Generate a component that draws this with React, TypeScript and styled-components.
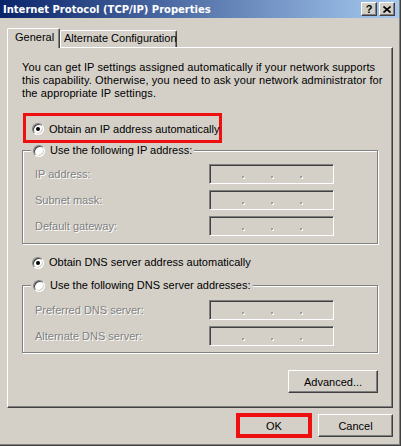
import React from "react";
import styled, { createGlobalStyle } from "styled-components";

const GlobalStyle = createGlobalStyle`
  html, body {
    margin: 0;
    padding: 0;
    background: #d4d0c8;
  }
  body {
    font-family: "Liberation Sans", Arial, sans-serif;
    font-size: 11px;
    color: #000;
  }
`;

const Window = styled.div`
  box-sizing: border-box;
  width: 401px;
  height: 446px;
  background: #d4d0c8;
  border-right: 1px solid #404040;
  border-bottom: 1px solid #404040;
  box-shadow: inset -1px -1px 0 #808080;
  display: flex;
  flex-direction: column;
  overflow: hidden;
`;

const TitleBar = styled.div`
  box-sizing: border-box;
  height: 18px;
  margin-right: 1px;
  padding: 0 4px 0 3px;
  display: flex;
  align-items: center;
  background: linear-gradient(to right, #0a246a, #a6caf0);
`;

const Title = styled.span`
  flex: 1;
  color: #fff;
  font-family: "DejaVu Sans", Verdana, sans-serif;
  font-weight: bold;
  font-size: 10px;
  white-space: nowrap;
`;

const CaptionButtons = styled.div`
  display: flex;
  gap: 2px;
`;

const CaptionButton = styled.div`
  box-sizing: border-box;
  width: 16px;
  height: 14px;
  background: #d4d0c8;
  border: 1px solid;
  border-color: #fff #404040 #404040 #fff;
  box-shadow: inset -1px -1px 0 #808080;
  display: flex;
  align-items: center;
  justify-content: center;
  font-weight: bold;
  font-size: 11px;
  line-height: 1;
`;

const Body = styled.div`
  padding: 10px 7px 0 7px;
  display: flex;
  flex-direction: column;
`;

const TabStrip = styled.div`
  display: flex;
  align-items: flex-end;
  height: 19px;
`;

const Tab = styled.div<{ $active?: boolean }>`
  box-sizing: border-box;
  position: relative;
  background: #d4d0c8;
  border: 1px solid;
  border-color: #fff #404040 transparent #fff;
  border-bottom: none;
  border-radius: 2px 2px 0 0;
  box-shadow: inset -1px 0 0 #808080;
  line-height: 13px;
  white-space: nowrap;
  width: ${p => (p.$active ? "53px" : "117px")};
  height: ${p => (p.$active ? "20px" : "17px")};
  padding: ${p => (p.$active ? "2px 0 0 7px" : "1px 0 0 3px")};
  margin-bottom: ${p => (p.$active ? "-1px" : "0")};
  z-index: ${p => (p.$active ? 1 : 0)};
`;

const Panel = styled.div`
  box-sizing: border-box;
  width: 386px;
  height: 361px;
  border: 1px solid;
  border-color: #fff #404040 #404040 #fff;
  box-shadow: inset -1px -1px 0 #808080;
  padding: 13px 13px 0 14px;
  display: flex;
  flex-direction: column;
`;

const Intro = styled.p`
  margin: 0;
  line-height: 13px;
  letter-spacing: 0.1px;
  white-space: nowrap;
`;

const Marked = styled.div`
  box-sizing: border-box;
  width: 199px;
  height: 30px;
  margin: 13px 0 0 1px;
  padding: 2px 0 0 6px;
  border: 3px solid #ee1010;
  display: flex;
  align-items: center;
`;

const Option = styled.label`
  display: flex;
  align-items: center;
  gap: 5px;
  line-height: 13px;
  white-space: nowrap;
`;

const Radio = styled.span<{ $checked?: boolean }>`
  box-sizing: border-box;
  width: 12px;
  height: 12px;
  flex-shrink: 0;
  border-radius: 50%;
  background: #fff;
  border: 1px solid;
  border-color: #808080 #fff #fff #808080;
  box-shadow: inset 1px 1px 0 #404040, inset -1px -1px 0 #d4d0c8;
  display: flex;
  align-items: center;
  justify-content: center;
  &::after {
    content: "";
    width: 4px;
    height: 4px;
    border-radius: 50%;
    background: #000;
    display: ${p => (p.$checked ? "block" : "none")};
  }
`;

const Group = styled.div<{ $top: number; $padTop: number; $padBottom: number }>`
  position: relative;
  box-sizing: border-box;
  width: 356px;
  margin-top: ${p => p.$top}px;
  border: 1px solid #808080;
  box-shadow: 1px 1px 0 #fff, inset 1px 1px 0 #fff;
  padding: ${p => `${p.$padTop}px 0 ${p.$padBottom}px 12px`};
  display: grid;
  grid-template-columns: 174px 125px;
  row-gap: 6px;
  align-items: center;
`;

const Legend = styled.div`
  position: absolute;
  top: -7px;
  left: 8px;
  padding: 0 2px;
  background: #d4d0c8;
`;

const FieldLabel = styled.span`
  color: #808080;
  text-shadow: 1px 1px 0 #fff;
  line-height: 13px;
`;

const IpField = styled.div`
  box-sizing: border-box;
  width: 125px;
  height: 20px;
  background: #d4d0c8;
  border: 1px solid;
  border-color: #808080 #fff #fff #808080;
  box-shadow: inset 1px 1px 0 #404040, inset -1px -1px 0 #d4d0c8;
  display: flex;
  align-items: center;
  padding: 0 0 0 32px;
  gap: 27px;
`;

const Dot = styled.span`
  width: 2px;
  height: 2px;
  margin-top: 6px;
  background: #a0a0a0;
  box-shadow: 1px 1px 0 #fff;
`;

const LooseOption = styled(Option)`
  margin: 12px 0 0 10px;
`;

const Button = styled.button<{ $width?: number; $marked?: boolean }>`
  box-sizing: border-box;
  width: ${p => p.$width ?? 75}px;
  height: ${p => (p.$marked ? 25 : 23)}px;
  padding: 0;
  background: #d4d0c8;
  font-family: "Liberation Sans", Arial, sans-serif;
  font-size: 11px;
  color: #000;
  border: ${p => (p.$marked ? "4px solid #ee1010" : "1px solid")};
  border-color: ${p => (p.$marked ? "#ee1010" : "#fff #404040 #404040 #fff")};
  box-shadow: ${p => (p.$marked ? "none" : "inset -1px -1px 0 #808080")};
`;

const PanelActions = styled.div`
  display: flex;
  justify-content: flex-end;
  width: 356px;
  margin-top: 17px;
`;

const DialogActions = styled.div`
  display: flex;
  justify-content: flex-end;
  align-items: center;
  gap: 6px;
  margin-top: 5px;
`;

const XGlyph = () => (
  <svg width="8" height="7" viewBox="0 0 8 7">
    <path d="M0.5 0.5 L7.5 6.5 M7.5 0.5 L0.5 6.5" stroke="#000" strokeWidth="1.6" />
  </svg>
);

const IpBox = () => (
  <IpField>
    <Dot />
    <Dot />
    <Dot />
  </IpField>
);

const App: React.FC = () => (
  <>
    <GlobalStyle />
    <Window>
      <TitleBar>
        <Title>Internet Protocol (TCP/IP) Properties</Title>
        <CaptionButtons>
          <CaptionButton>?</CaptionButton>
          <CaptionButton>
            <XGlyph />
          </CaptionButton>
        </CaptionButtons>
      </TitleBar>
      <Body>
        <TabStrip>
          <Tab $active>General</Tab>
          <Tab>Alternate Configuration</Tab>
        </TabStrip>
        <Panel>
          <Intro>
            You can get IP settings assigned automatically if your network supports
            <br />
            this capability. Otherwise, you need to ask your network administrator for
            <br />
            the appropriate IP settings.
          </Intro>
          <Marked>
            <Option>
              <Radio $checked />
              Obtain an IP address automatically
            </Option>
          </Marked>
          <Group $top={7} $padTop={13} $padBottom={7}>
            <Legend>
              <Option>
                <Radio />
                Use the following IP address:
              </Option>
            </Legend>
            <FieldLabel>IP address:</FieldLabel>
            <IpBox />
            <FieldLabel>Subnet mask:</FieldLabel>
            <IpBox />
            <FieldLabel>Default gateway:</FieldLabel>
            <IpBox />
          </Group>
          <LooseOption>
            <Radio $checked />
            Obtain DNS server address automatically
          </LooseOption>
          <Group $top={16} $padTop={14} $padBottom={6}>
            <Legend>
              <Option>
                <Radio />
                Use the following DNS server addresses:
              </Option>
            </Legend>
            <FieldLabel>Preferred DNS server:</FieldLabel>
            <IpBox />
            <FieldLabel>Alternate DNS server:</FieldLabel>
            <IpBox />
          </Group>
          <PanelActions>
            <Button $width={90}>Advanced...</Button>
          </PanelActions>
        </Panel>
        <DialogActions>
          <Button $width={76} $marked>OK</Button>
          <Button>Cancel</Button>
        </DialogActions>
      </Body>
    </Window>
  </>
);

export default App;
